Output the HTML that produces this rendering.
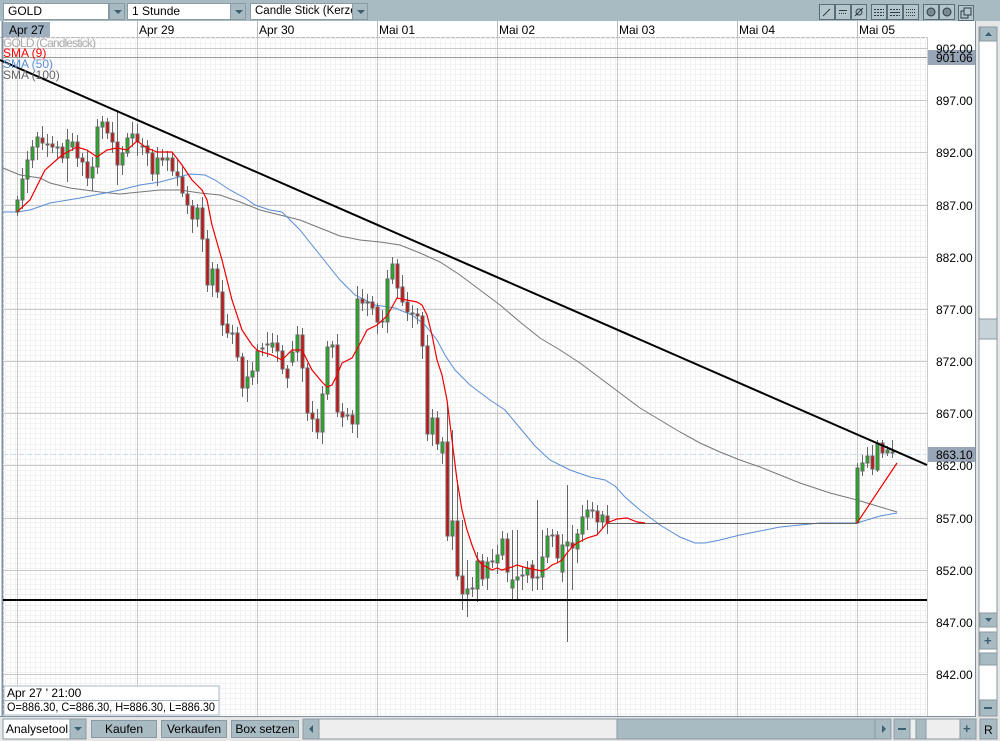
<!DOCTYPE html>
<html><head><meta charset="utf-8"><style>
*{margin:0;padding:0;box-sizing:border-box}
body{width:1000px;height:741px;overflow:hidden;background:#e6e6e6;font-family:"Liberation Sans",sans-serif;font-size:12px;position:relative}
.tb{position:absolute;left:0;top:0;width:1000px;height:21px;background:#a8bbc3}
.sel{position:absolute;top:3px;height:17px;background:#fff;border:1px solid #8a9aa2;font-size:12px;line-height:15px;padding-left:4px;color:#000;overflow:hidden;white-space:nowrap}
.arr{position:absolute;top:3px;width:16px;height:17px;background:#a8bbc3;border:1px solid #8a9aa2}
.arr:after{content:"";position:absolute;left:4px;top:6px;border-left:4px solid transparent;border-right:4px solid transparent;border-top:4px solid #3d6070}
.ib{position:absolute;top:4px;width:16px;height:16px;border:1px solid #5a6e78;background:#b4c5cc}
.btn{position:absolute;top:720px;height:18px;background:#a8bbc3;border:1px solid #8a9aa2;text-align:center;line-height:16px;font-size:12px}
</style></head><body>
<div class="tb"></div>
<div class="sel" style="left:3px;width:106px">GOLD</div><div class="arr" style="left:109px"></div>
<div class="sel" style="left:127px;width:104px">1 Stunde</div><div class="arr" style="left:230px"></div>
<div class="sel" style="left:250px;width:103px;font-size:11.5px">Candle Stick (Kerzen</div><div class="arr" style="left:352px"></div>
<div class="ib" style="left:819px"></div><div class="ib" style="left:835px"></div><div class="ib" style="left:851px"></div>
<div class="ib" style="left:871px"></div><div class="ib" style="left:887px"></div><div class="ib" style="left:903px"></div>
<div class="ib" style="left:923px"></div><div class="ib" style="left:939px"></div>
<div class="ib" style="left:958px;top:5px"></div>
<svg width="1000" height="741" style="position:absolute;left:0;top:0" id="s">
<g stroke="#2c3c44" stroke-width="1" fill="none">
<line x1="823" y1="16" x2="830" y2="9"/>
<line x1="839" y1="10.5" x2="847" y2="10.5"/><line x1="839" y1="13.5" x2="847" y2="13.5" stroke-dasharray="1,1"/>
<circle cx="859" cy="12" r="3"/><line x1="855" y1="16" x2="863" y2="8"/>
<line x1="874" y1="9.5" x2="884" y2="9.5" stroke-dasharray="2,1"/><line x1="874" y1="12.5" x2="884" y2="12.5" stroke-dasharray="2,1"/><line x1="874" y1="15.5" x2="884" y2="15.5" stroke-dasharray="2,1"/>
<line x1="890" y1="9.5" x2="900" y2="9.5" stroke-dasharray="2,1"/><line x1="890" y1="12.5" x2="900" y2="12.5"/><line x1="890" y1="15.5" x2="900" y2="15.5" stroke-dasharray="2,1"/>
<line x1="906" y1="9.5" x2="916" y2="9.5" stroke-dasharray="1,1"/><line x1="906" y1="12.5" x2="916" y2="12.5" stroke-dasharray="1,1"/><line x1="906" y1="15.5" x2="916" y2="15.5" stroke-dasharray="1,1"/>
<circle cx="931" cy="12" r="4" fill="#7a8a92"/><circle cx="947" cy="12" r="4" fill="#7a8a92"/>
<rect x="961" y="11" width="7" height="7" fill="#b4c5cc"/><rect x="964" y="8" width="7" height="7" fill="#b4c5cc"/>
</g>
<rect x="0" y="21" width="976" height="695" fill="#fff"/>
<line x1="927.5" y1="37" x2="927.5" y2="716" stroke="#ccc"/>
<line x1="0" y1="37.5" x2="927" y2="37.5" stroke="#bbb"/>
<line x1="2.5" y1="21" x2="2.5" y2="716" stroke="#8090a0" stroke-width="2"/>
<line x1="0" y1="716.5" x2="976" y2="716.5" stroke="#8090a0"/>
<line x1="975.5" y1="21" x2="975.5" y2="716" stroke="#8090a0"/>
<g id="grid"></g>
<rect x="3" y="22" width="47" height="15" fill="#9eafc0"/>
<text x="9" y="34" font-size="12" font-family="Liberation Sans">Apr 27</text>
<g font-size="12" font-family="Liberation Sans">
<text x="139" y="34">Apr 29</text><text x="259" y="34">Apr 30</text><text x="379" y="34">Mai 01</text>
<text x="499" y="34">Mai 02</text><text x="619" y="34">Mai 03</text><text x="739" y="34">Mai 04</text><text x="859" y="34">Mai 05</text>
</g>
<g stroke="#bbb"><line x1="137.5" y1="21" x2="137.5" y2="37"/><line x1="257.5" y1="21" x2="257.5" y2="37"/><line x1="377.5" y1="21" x2="377.5" y2="37"/><line x1="497.5" y1="21" x2="497.5" y2="37"/><line x1="617.5" y1="21" x2="617.5" y2="37"/><line x1="737.5" y1="21" x2="737.5" y2="37"/><line x1="857.5" y1="21" x2="857.5" y2="37"/></g>
<line x1="3" y1="57.5" x2="927" y2="57.5" stroke="#999"/>
<line x1="3" y1="454.5" x2="927" y2="454.5" stroke="#c8dcf5" stroke-dasharray="5,3"/>
<polyline fill="none" stroke="#777" stroke-width="1" points="3,168 20,175 40,178 50,183 70,188 100,192 120,194 140,192 160,190 180,190 200,193 220,195 240,202 260,210 280,215 300,220 320,228 340,236 360,240 380,242 400,245 420,253 440,262 460,275 480,290 500,305 520,322 540,338 560,350 580,363 600,378 620,393 640,408 660,420 680,432 700,443 720,452 740,460 760,467 780,475 800,483 830,493 857,500 897,512"/>
<polyline fill="none" stroke="#5b8dd8" stroke-width="1" points="3,212 17,212 30,210 50,203 80,198 100,194 120,190 140,185 160,182 175,178 190,174 205,175 215,180 230,190 245,198 255,205 270,210 282,212 300,230 320,255 340,280 355,295 375,305 395,308 412,315 425,325 437,340 445,355 455,370 470,385 490,400 505,410 520,428 535,446 550,460 570,470 590,477 605,480 615,486 625,497 640,510 660,525 680,537 695,543 705,543 720,540 740,535 780,527 820,523 857,523 880,516 897,513"/>
<line x1="607" y1="523.5" x2="857" y2="523.5" stroke="#666"/>
<g id="c"></g>
<polyline fill="none" stroke="#e00" stroke-width="1.2" points="17,212 30,200 45,170 62,155 77,147 87,150 97,157 107,150 117,148 127,150 137,141 147,148 157,152 172,152 182,165 192,180 202,190 207,200 212,225 222,260 232,300 242,330 252,345 257,350 262,352 272,355 282,360 292,350 302,350 312,370 322,382 327,387 332,385 337,375 342,363 352,358 362,340 367,330 377,325 387,316 397,298 407,300 417,302 422,305 427,315 432,335 437,360 442,375 447,400 452,440 457,480 462,510 467,530 472,545 477,558 482,565 487,567 492,570 497,568 502,570 512,567 517,565 527,568 537,570 542,571 547,569 552,565 557,563 562,560 567,553 572,547 577,543 587,538 597,535 607,523 617,519 627,518 637,522 645,523"/>
<polyline fill="none" stroke="#e00" stroke-width="1.2" points="857,523 897,463"/>
<line x1="0" y1="60" x2="927" y2="465" stroke="#000" stroke-width="2"/>
<line x1="3" y1="600" x2="927" y2="600" stroke="#000" stroke-width="2"/>
<rect x="928" y="50" width="47" height="15" fill="#98a6b8"/>
<rect x="928" y="447" width="47" height="15" fill="#98a6b8"/>
<g font-size="12" font-family="Liberation Sans" fill="#000">
<text x="936" y="53">902.00</text><text x="936" y="62">901.06</text>
<text x="936" y="105">897.00</text><text x="936" y="157">892.00</text><text x="936" y="210">887.00</text>
<text x="936" y="262">882.00</text><text x="936" y="314">877.00</text><text x="936" y="366">872.00</text>
<text x="936" y="418">867.00</text><text x="936" y="459">863.10</text><text x="936" y="470">862.00</text>
<text x="936" y="523">857.00</text><text x="936" y="575">852.00</text><text x="936" y="627">847.00</text><text x="936" y="679">842.00</text>
</g>
<g font-size="12" font-family="Liberation Sans">
<text x="3" y="47" fill="#aaa" textLength="93">GOLD (Candlestick)</text>
<text x="3" y="57" fill="#f00">SMA (9)</text>
<text x="3" y="68" fill="#5b8dd8">SMA (50)</text>
<text x="3" y="79" fill="#666">SMA (100)</text>
</g>
<rect x="4" y="686" width="215" height="29" fill="#fff" stroke="#a8bbc3"/>
<line x1="4" y1="700.5" x2="219" y2="700.5" stroke="#a8bbc3"/>
<text x="7" y="697" font-size="12" font-family="Liberation Sans">Apr 27 ' 21:00</text>
<text x="7" y="711" font-size="12" font-family="Liberation Sans" textLength="208" lengthAdjust="spacingAndGlyphs">O=886.30, C=886.30, H=886.30, L=886.30</text>
<rect x="979" y="27" width="18" height="689" fill="#fff" stroke="#8a9aa2"/>
<rect x="980" y="27" width="17" height="14" fill="#a8bbc3" stroke="#8a9aa2"/>
<path d="M985 36 L988.5 32 L992 36Z" fill="#3d6070"/>
<rect x="979" y="319" width="18" height="20" fill="#c8d3d8" stroke="#8a9aa2"/>
<rect x="980" y="613" width="17" height="14" fill="#a8bbc3" stroke="#8a9aa2"/>
<path d="M985 618 L988.5 622 L992 618Z" fill="#3d6070"/>
<rect x="980" y="632" width="17" height="17" fill="#a8bbc3" stroke="#8a9aa2"/>
<text x="984" y="645" font-size="13" font-weight="bold" fill="#3d6070">+</text>
<rect x="980" y="653" width="17" height="12" fill="#a8bbc3" stroke="#8a9aa2"/>
<rect x="980" y="700" width="17" height="16" fill="#a8bbc3" stroke="#8a9aa2"/>
<rect x="984" y="707" width="8" height="2" fill="#3d6070"/>
<rect x="3" y="719" width="67" height="20" fill="#fff" stroke="#8a9aa2"/>
<text x="6" y="733" font-size="12" font-family="Liberation Sans">Analysetool</text>
<rect x="70" y="719" width="16" height="20" fill="#a8bbc3" stroke="#8a9aa2"/>
<path d="M74 727 L78 731 L82 727Z" fill="#3d6070"/>
<rect x="303" y="719" width="588" height="20" fill="#eee" stroke="#8a9aa2"/>
<rect x="303" y="719" width="16" height="20" fill="#a8bbc3" stroke="#8a9aa2"/>
<path d="M313 725 L309 729 L313 733Z" fill="#3d6070"/>
<rect x="617" y="719" width="258" height="20" fill="#a8bbc3" stroke="#8a9aa2"/>
<rect x="875" y="719" width="16" height="20" fill="#a8bbc3" stroke="#8a9aa2"/>
<path d="M882 725 L886 729 L882 733Z" fill="#3d6070"/>
<rect x="894" y="719" width="82" height="20" fill="#eee" stroke="#8a9aa2"/>
<rect x="894" y="719" width="16" height="20" fill="#a8bbc3" stroke="#8a9aa2"/>
<rect x="898" y="728" width="8" height="2" fill="#3d6070"/>
<rect x="916" y="719" width="10" height="20" fill="#a8bbc3" stroke="#8a9aa2"/>
<rect x="960" y="719" width="16" height="20" fill="#a8bbc3" stroke="#8a9aa2"/>
<text x="963" y="733" font-size="13" font-weight="bold" fill="#3d6070">+</text>
<rect x="980" y="719" width="17" height="20" fill="#a8bbc3" stroke="#8a9aa2"/>
<text x="984" y="734" font-size="12" font-family="Liberation Sans">R</text>
</svg>
<div class="btn" style="left:91px;width:66px">Kaufen</div>
<div class="btn" style="left:161px;width:66px">Verkaufen</div>
<div class="btn" style="left:231px;width:68px">Box setzen</div>
<script>
var ns="http://www.w3.org/2000/svg";
function el(p,t,a){var e=document.createElementNS(ns,t);for(var k in a)e.setAttribute(k,a[k]);p.appendChild(e);return e;}
var g=document.getElementById("grid");
for(var x=5;x<927;x+=5)el(g,"line",{x1:x+.5,y1:37,x2:x+.5,y2:716,stroke:"#f2f2f2"});
for(var y=38;y<716;y+=5.2)el(g,"line",{x1:3,y1:Math.round(y)+.5,x2:927,y2:Math.round(y)+.5,stroke:"#f2f2f2"});
[17,137,257,377,497,617,737,857].forEach(function(x){el(g,"line",{x1:x+.5,y1:37,x2:x+.5,y2:716,stroke:"#c8c8c8"})});
for(var i=0;i<13;i++){var yy=Math.round(48+i*52.17)+.5;el(g,"line",{x1:3,y1:yy,x2:927,y2:yy,stroke:"#c8c8c8"});}
var d=[[200,212,'g'],[179,200,'g'],[160,179,'g'],[147,160,'g'],[137,147,'g'],[138,143,'r'],[144,145,'r'],[144,147,'r'],[147,148,'r'],[147,158,'r'],[140,158,'g'],[142,147,'g'],[142,158,'r'],[158,162,'r'],[162,178,'r'],[167,178,'g'],[127,167,'g'],[122,127,'g'],[122,133,'r'],[133,142,'r'],[142,165,'r'],[153,165,'g'],[138,153,'g'],[134,138,'g'],[134,142,'r'],[146,147,'r'],[146,153,'r'],[153,174,'r'],[158,174,'g'],[158,160,'r'],[158,160,'g'],[158,171,'r'],[172,176,'r'],[177,193,'r'],[194,205,'r'],[206,219,'r'],[208,219,'g'],[208,239,'r'],[239,285,'r'],[269,285,'g'],[269,292,'r'],[292,325,'r'],[324,333,'r'],[333,334,'r'],[333,357,'r'],[357,388,'r'],[377,388,'g'],[371,377,'g'],[351,371,'g'],[348,349,'r'],[344,345,'r'],[343,347,'g'],[343,351,'r'],[351,369,'r'],[369,378,'r'],[352,362,'g'],[335,352,'g'],[335,368,'r'],[368,413,'r'],[413,419,'r'],[419,432,'r'],[394,432,'g'],[347,394,'g'],[345,347,'g'],[345,412,'r'],[412,417,'r'],[415,416,'r'],[415,424,'r'],[299,424,'g'],[299,303,'r'],[302,303,'r'],[302,308,'r'],[307,322,'r'],[321,322,'r'],[279,322,'g'],[264,279,'g'],[264,288,'r'],[287,302,'r'],[302,312,'r'],[313,314,'r'],[314,316,'r'],[316,346,'r'],[346,434,'r'],[418,434,'g'],[418,444,'r'],[442,453,'g'],[442,536,'r'],[521,536,'g'],[521,576,'r'],[576,594,'r'],[589,594,'g'],[588,589,'r'],[561,589,'g'],[561,579,'r'],[562,578,'g'],[561,562,'r'],[555,563,'g'],[539,555,'g'],[539,572,'r'],[580,588,'g'],[577,580,'g'],[575,576,'r'],[568,575,'g'],[565,578,'r'],[577,578,'r'],[557,577,'g'],[536,557,'g'],[535,536,'r'],[535,558,'r'],[545,572,'g'],[542,546,'g'],[543,548,'r'],[534,549,'g'],[517,534,'g'],[510,517,'g'],[510,511,'r'],[511,522,'r'],[515,522,'g'],[516,523,'r']];
var wk={10:[130,182],20:[110,185],46:[360,395],68:[286,430],86:[405,470],87:[430,550],88:[480,565],89:[520,610],90:[560,617],99:[530,600],100:[530,600],104:[500,590],110:[485,642],111:[525,590],105:[530,590]};
var c=document.getElementById("c");
function cd(x,t,b,col,h,l){el(c,"line",{x1:x+.5,y1:h,x2:x+.5,y2:l,stroke:"#666"});el(c,"rect",{x:x-1,y:t,width:3,height:Math.max(b-t,1),fill:col=='g'?'#1db31d':'#d01010',stroke:"#666","stroke-width":"1"});}
d.forEach(function(a,i){var x=17+i*5;var h=a[0]-4-((i*7)%9),l=a[1]+4+((i*5)%11);if(wk[i]){h=Math.min(h,wk[i][0]);l=Math.max(l,wk[i][1]);}cd(x,a[0],a[1],a[2],h,l);});
[[857,468,523,'g',463,523],[862,463,471,'g',455,476],[867,456,463,'g',447,468],[872,456,469,'r',445,475],[877,443,470,'g',440,472],[882,443,453,'r',440,458],[887,450,453,'g',446,456],[892,452,453,'r',440,458]].forEach(function(a){cd(a[0],a[1],a[2],a[3],a[4],a[5]);});
</script>
</body></html>
